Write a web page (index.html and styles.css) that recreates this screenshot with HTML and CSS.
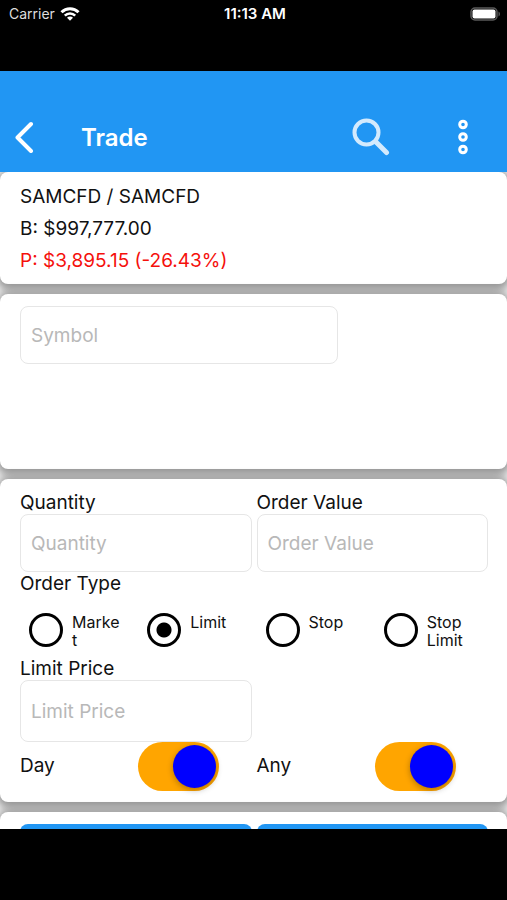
FILE: index.html
```html
<!DOCTYPE html>
<html lang="en">
<head>
    <meta charset="UTF-8">
    <meta name="viewport" content="width=device-width, initial-scale=1.0">
    <title>Trade</title>
    <link rel="stylesheet" href="styles.css">
</head>
<body>
    <div class="status-bar">
        <div class="carrier">
            <span>Carrier</span>
            <svg width="20" height="14" viewBox="0 0 20 14" fill="none" stroke="#fff" stroke-width="3">
                <path d="M1.5 5.2a12 12 0 0 1 17 0"/>
                <path d="M4.8 8.6a7.4 7.4 0 0 1 10.4 0" stroke-width="2.6"/>
                <path d="M10 13.8 7 10.8a4.2 4.2 0 0 1 6 0z" fill="#fff" stroke="none"/>
            </svg>
        </div>
        <div class="time">11:13 AM</div>
        <div class="battery">
            <svg width="31" height="14" viewBox="0 0 31 14">
                <rect x="1" y="1" width="26" height="12" rx="4" fill="none" stroke="#5a5a5a" stroke-width="1.5"/>
                <rect x="2.5" y="2.5" width="23" height="9" rx="2" fill="#fff"/>
                <path d="M28.5 4.5c2 1 2 4 0 5z" fill="#5a5a5a"/>
            </svg>
        </div>
    </div>
    <header class="header">
        <button class="icon-button" type="button" aria-label="Back">
            <svg width="20" height="32" viewBox="0 0 20 32" fill="none" stroke="#fff" stroke-width="4" stroke-linecap="round" stroke-linejoin="round">
                <path d="M16 3 2.5 16.5 16 30"/>
            </svg>
        </button>
        <h1 class="title">Trade</h1>
        <button class="icon-button search" type="button" aria-label="Search">
            <svg width="38" height="38" viewBox="0 0 38 38" fill="none" stroke="#d3eafd">
                <circle cx="14.5" cy="14.5" r="12" stroke-width="4"/>
                <path d="M24.5 24.5 34.5 34.5" stroke-width="5" stroke-linecap="round"/>
            </svg>
        </button>
        <button class="icon-button" type="button" aria-label="More">
            <svg width="10" height="36" viewBox="0 0 10 36" fill="none" stroke="#fff" stroke-width="3">
                <circle cx="5" cy="5.5" r="3.3"/>
                <circle cx="5" cy="18" r="3.3"/>
                <circle cx="5" cy="30.5" r="3.3"/>
            </svg>
        </button>
    </header>
    <main class="content">
        <section class="card account">
            <div>SAMCFD / SAMCFD</div>
            <div>B: $997,777.00</div>
            <div class="loss">P: $3,895.15 (-26.43%)</div>
        </section>

        <section class="card symbol">
            <input class="field" type="text" placeholder="Symbol" aria-label="Symbol">
        </section>

        <form class="card order">
            <div class="row">
                <div class="group">
                    <label for="quantity">Quantity</label>
                    <input class="field" id="quantity" type="text" placeholder="Quantity">
                </div>
                <div class="group">
                    <label for="order-value">Order Value</label>
                    <input class="field" id="order-value" type="text" placeholder="Order Value">
                </div>
            </div>
            <div class="label">Order Type</div>
            <div class="options">
                <label class="option"><input type="radio" name="type"><span>Market</span></label>
                <label class="option"><input type="radio" name="type" checked><span>Limit</span></label>
                <label class="option"><input type="radio" name="type"><span>Stop</span></label>
                <label class="option"><input type="radio" name="type"><span>Stop Limit</span></label>
            </div>
            <div class="row">
                <div class="group">
                    <label for="limit-price">Limit Price</label>
                    <input class="field tall" id="limit-price" type="text" placeholder="Limit Price">
                </div>
            </div>
            <div class="switches">
                <label for="day">Day</label>
                <input class="switch" id="day" type="checkbox" checked>
                <label for="any">Any</label>
                <input class="switch" id="any" type="checkbox" checked>
            </div>
        </form>

        <section class="card row">
            <button class="action" type="button" aria-label="Buy"></button>
            <button class="action" type="button" aria-label="Sell"></button>
        </section>
    </main>
    <footer class="bottom-bar"></footer>
</body>
</html>
```

FILE: styles.css
```css
* {
    box-sizing: border-box;
}
body {
    margin: 0;
    height: 100vh;
    display: flex;
    flex-direction: column;
    background-color: #000;
    font-family: Inter, "Liberation Sans", sans-serif;
    font-size: 19px;
    line-height: 23px;
    color: #111;
}
.status-bar {
    display: grid;
    grid-template-columns: 1fr auto 1fr;
    align-items: center;
    height: 71px;
    padding: 0 6px 44px 9px;
    color: #fff;
    font-size: 15px;
    flex-shrink: 0;
}
.carrier {
    display: flex;
    align-items: center;
    gap: 5px;
    color: #ddd;
    font-size: 14px;
}
.time {
    font-weight: 600;
}
.battery {
    display: flex;
    justify-content: flex-end;
}

/* header */
.header {
    display: flex;
    align-items: center;
    height: 101px;
    padding: 31px 39px 0 15px;
    background-color: #2196f3;
    color: #fff;
    flex-shrink: 0;
}
.icon-button {
    display: flex;
    padding: 0;
    border: none;
    background: none;
    cursor: pointer;
}
.title {
    flex: 1;
    margin: 0 0 0 46px;
    font-size: 24px;
    font-weight: 600;
}
.search {
    margin-right: 68px;
}

/* cards */
.content {
    flex: 1;
    min-height: 0;
    overflow: hidden;
    display: flex;
    flex-direction: column;
    gap: 10px;
    background-color: #fff;
}
.card {
    flex-shrink: 0;
    padding: 12px 19px 11px 20px;
    border-radius: 8px;
    background-color: #fff;
    box-shadow: 0 2px 10px 4px rgba(0, 0, 0, 0.42);
}
.account {
    padding: 9px 20px 7px;
    line-height: 32px;
}
.loss {
    color: #f5100c;
}
.symbol {
    min-height: 175px;
}
.symbol .field {
    width: 68%;
}
.row {
    display: grid;
    grid-template-columns: 1fr 1fr;
    gap: 5px;
}
.group label {
    display: block;
}
.field {
    display: block;
    width: 100%;
    height: 58px;
    padding: 0 10px;
    border: 1px solid #e6e6e6;
    border-radius: 8px;
    background-color: #fff;
    font: inherit;
    color: #111;
}
.field.tall {
    height: 62px;
}
.field::placeholder {
    color: #b8b8b8;
}
.options {
    display: grid;
    grid-template-columns: repeat(4, 1fr);
    gap: 5px;
    height: 62px;
    padding-top: 18px;
}
.option {
    display: flex;
    align-items: flex-start;
    gap: 9px;
    padding: 0 12px 0 9px;
    font-size: 16px;
    line-height: 18px;
}
.option span {
    min-width: 0;
    overflow-wrap: anywhere;
}
.option input {
    appearance: none;
    flex-shrink: 0;
    width: 34px;
    height: 34px;
    margin: 0;
    border: 3px solid #000;
    border-radius: 50%;
}
.option input:checked {
    background: radial-gradient(circle, #000 7px, transparent 8px);
}
.switches {
    display: grid;
    grid-template-columns: repeat(4, 1fr);
    gap: 5px;
    align-items: center;
}
.switches label {
    padding-bottom: 3px;
}
.switch {
    appearance: none;
    display: flex;
    justify-content: flex-end;
    width: 81px;
    height: 49px;
    margin: 0;
    padding: 3px;
    border-radius: 25px;
    background-color: orange;
}
.switch::before {
    content: "";
    width: 43px;
    height: 43px;
    border-radius: 50%;
    background-color: blue;
    box-shadow: 0 2px 6px rgba(0, 0, 0, 0.3);
}
.action {
    height: 50px;
    border: none;
    border-radius: 8px;
    background-color: #2196f3;
}
.bottom-bar {
    height: 71px;
    flex-shrink: 0;
}
```
